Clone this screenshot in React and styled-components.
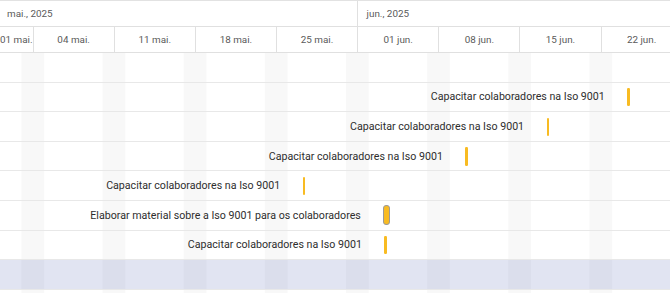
import React from "react";
import styled, { createGlobalStyle } from "styled-components";

const Global = createGlobalStyle`
  html, body { margin: 0; padding: 0; background: #fff; overflow: hidden; }
  body { font-family: Roboto, "Noto Sans", sans-serif; }
`;

const DAY = 81.15 / 7;
const WEEK = 81.15;

const Gantt = styled.div`
  width: 670px;
  height: 293px;
  overflow: hidden;
  border-top: 1px solid #e2e2e2;
  box-sizing: border-box;
  background: #fff;
`;

const HeaderRow = styled.div`
  display: flex;
  height: 26px;
  box-sizing: border-box;
  border-bottom: 1px solid #e0e0e0;
  white-space: nowrap;
`;

const MonthCell = styled.div`
  flex: 0 0 ${(p) => p.$w}px;
  box-sizing: border-box;
  border-right: 1px solid #e0e0e0;
  display: flex;
  align-items: center;
  padding-left: ${(p) => p.$pad}px;
  font-size: 9.9px;
  color: #5a5a5a;
`;

const WeekCell = styled.div`
  flex: 0 0 ${(p) => p.$w}px;
  box-sizing: border-box;
  border-right: 1px solid #e0e0e0;
  display: flex;
  align-items: center;
  justify-content: center;
  font-size: 9.9px;
  color: #5a5a5a;
  overflow: visible;
`;

const Body = styled.div`
  background-color: #fff;
  background-image: linear-gradient(
    to right,
    #f8f8f8 0,
    #f8f8f8 ${2 * DAY}px,
    transparent ${2 * DAY}px,
    transparent ${WEEK}px
  );
  background-size: ${WEEK}px 100%;
  background-position: ${33 - DAY}px 0;
  background-repeat: repeat-x;
  height: 240px;
`;

const Row = styled.div`
  position: relative;
  height: 29.6px;
  box-sizing: border-box;
  border-bottom: 1px solid #e8e8e8;
  background: ${(p) => (p.$selected ? "rgba(68, 86, 174, 0.16)" : "transparent")};
`;

const Task = styled.div`
  position: absolute;
  top: 0;
  bottom: 0;
  display: flex;
  align-items: center;
`;

const Label = styled.span`
  position: absolute;
  right: calc(100% + 22.5px);
  white-space: nowrap;
  font-size: 10.65px;
  color: #2e2e2e;
`;

const Bar = styled.div`
  width: ${(p) => (p.$wide ? 6.5 : 2.4)}px;
  height: ${(p) => (p.$wide ? 20 : 18.4)}px;
  box-sizing: border-box;
  background: #f8bb22;
  border-radius: ${(p) => (p.$wide ? 3 : 1.2)}px;
  border: ${(p) => (p.$wide ? "1px solid #9a9a9a" : "none")};
  margin-top: ${(p) => (p.$wide ? 0 : 0.6)}px;
`;

const months = [
  { label: "mai., 2025", w: 357.6 },
  { label: "jun., 2025", w: 400 },
];

const weeks = [
  { label: "01 mai.", w: 33 },
  { label: "04 mai.", w: WEEK },
  { label: "11 mai.", w: WEEK },
  { label: "18 mai.", w: WEEK },
  { label: "25 mai.", w: WEEK },
  { label: "01 jun.", w: WEEK },
  { label: "08 jun.", w: WEEK },
  { label: "15 jun.", w: WEEK },
  { label: "22 jun.", w: WEEK },
];

const tasks = [
  null,
  { label: "Capacitar colaboradores na Iso 9001", x: 627.3 },
  { label: "Capacitar colaboradores na Iso 9001", x: 546.6 },
  { label: "Capacitar colaboradores na Iso 9001", x: 465.4 },
  { label: "Capacitar colaboradores na Iso 9001", x: 302.7 },
  { label: "Elaborar material sobre a Iso 9001 para os colaboradores", x: 383.3, wide: true },
  { label: "Capacitar colaboradores na Iso 9001", x: 384.4 },
  "selected",
];

export default function App() {
  return (
    <>
      <Global />
      <Gantt>
        <HeaderRow>
          {months.map((m, i) => (
            <MonthCell key={i} $w={m.w} $pad={i === 0 ? 7 : 9}>
              {m.label}
            </MonthCell>
          ))}
        </HeaderRow>
        <HeaderRow>
          {weeks.map((w, i) => (
            <WeekCell key={i} $w={w.w}>
              {w.label}
            </WeekCell>
          ))}
        </HeaderRow>
        <Body>
          {tasks.map((t, i) => (
            <Row key={i} $selected={t === "selected"}>
              {t && t !== "selected" && (
                <Task style={{ left: `${t.x}px` }}>
                  <Label>{t.label}</Label>
                  <Bar $wide={t.wide} />
                </Task>
              )}
            </Row>
          ))}
        </Body>
      </Gantt>
    </>
  );
}
